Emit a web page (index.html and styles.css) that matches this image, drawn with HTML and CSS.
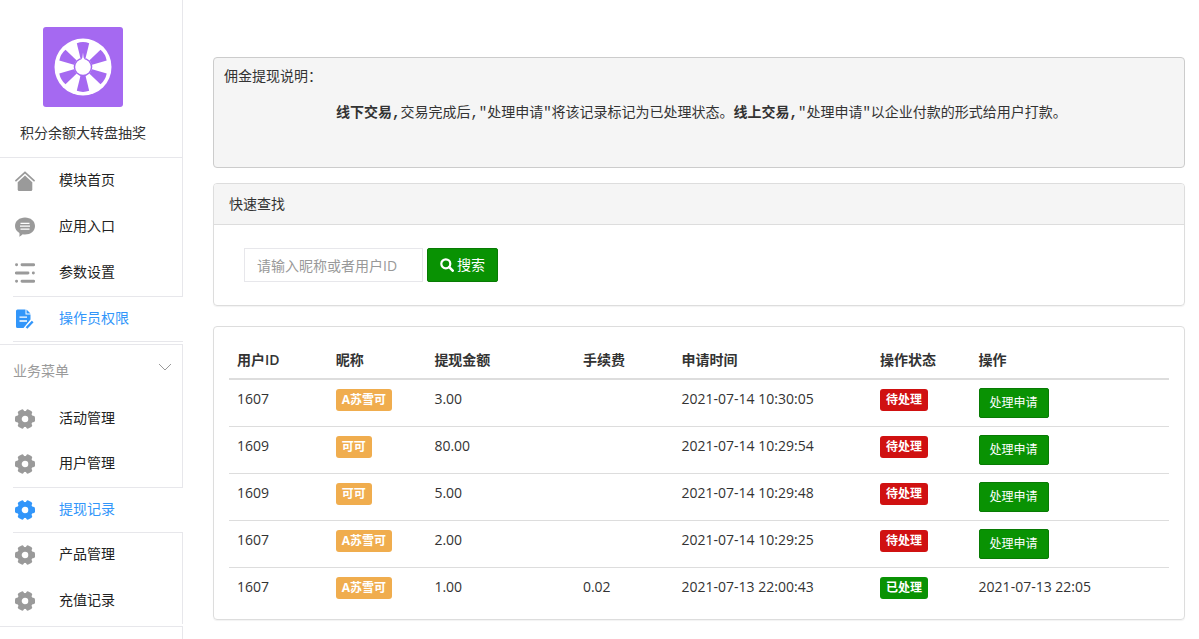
FILE: index.html
```html
<!DOCTYPE html>
<html lang="zh-CN">
<head>
<meta charset="utf-8">
<title>提现记录</title>
<link rel="stylesheet" href="styles.css">
</head>
<body>
<svg class="sprite" aria-hidden="true">
  <symbol id="gear" viewBox="0 0 20 20">
    <circle cx="10" cy="10" r="5.700" fill="none" stroke="currentColor" stroke-width="4.800"/>
    <g fill="currentColor">
      <rect x="0" y="6.800" width="5" height="6.400" rx="1.800"/>
      <rect x="0" y="6.800" width="5" height="6.400" rx="1.800" transform="rotate(60 10 10)"/>
      <rect x="0" y="6.800" width="5" height="6.400" rx="1.800" transform="rotate(120 10 10)"/>
      <rect x="0" y="6.800" width="5" height="6.400" rx="1.800" transform="rotate(180 10 10)"/>
      <rect x="0" y="6.800" width="5" height="6.400" rx="1.800" transform="rotate(240 10 10)"/>
      <rect x="0" y="6.800" width="5" height="6.400" rx="1.800" transform="rotate(300 10 10)"/>
    </g>
  </symbol>
</svg>
<div class="layout">
  <aside class="sidebar">
    <header class="brand">
      <svg class="brand-logo" viewBox="0 0 80 80" aria-hidden="true">
        <rect width="80" height="80" rx="3" fill="#a569f1"/>
        <circle cx="40" cy="40" r="28.500" fill="#fff"/>
        <g fill="#a569f1">
          <path id="slot" d="M37.400 31L33.800 16.200Q40 14 46.200 16.200L42.600 31Z"/>
          <use href="#slot" transform="rotate(60 40 40)"/>
          <use href="#slot" transform="rotate(120 40 40)"/>
          <use href="#slot" transform="rotate(180 40 40)"/>
          <use href="#slot" transform="rotate(240 40 40)"/>
          <use href="#slot" transform="rotate(300 40 40)"/>
          <circle cx="40" cy="40" r="9.300"/>
        </g>
        <circle cx="40" cy="40" r="7.800" fill="#fff"/>
        <path d="M37.800 33.500L39.400 30.500L40 25.500L40.600 30.500L42.200 33.500Z" fill="#fff"/>
      </svg>
      <div class="brand-name">积分余额大转盘抽奖</div>
    </header>
    <nav class="menu">
      <a class="menu-item" href="#">
        <svg class="icon" viewBox="0 0 20 20" aria-hidden="true"><path d="M1 9.600L10 1.400L19 9.600" fill="none" stroke="currentColor" stroke-width="1.800" stroke-linecap="round"/><path fill="currentColor" d="M10 4.600L17.300 11.200V18.500Q17.300 20 15.800 20H4.200Q2.700 20 2.700 18.500V11.200Z"/></svg>
        <span>模块首页</span></a>
      <a class="menu-item" href="#">
        <svg class="icon" viewBox="0 0 20 20" aria-hidden="true"><path fill="currentColor" d="M10 .5C15.600.5 20 4 20 9S15.600 17.500 10 17.500Q8.800 17.500 7.700 17.300Q6 19.200 4.200 19.700Q4.800 18 4.400 15.900Q0 13.500 0 9C0 4 4.400.5 10 .5Z"/><path d="M5.500 6.300H14.500M5 9.200H15M5.500 12.100H14.500" stroke="#fff" stroke-width="1.200"/></svg>
        <span>应用入口</span></a>
      <a class="menu-item" href="#">
        <svg class="icon" viewBox="0 0 20 20" aria-hidden="true"><path d="M1.500 1.800H1.600M7 1.800H18.700M1.300 10H13M18.300 10H18.400M1.500 18.200H1.600M7 18.200H18.700" stroke="currentColor" stroke-width="2.900" stroke-linecap="round"/></svg>
        <span>参数设置</span></a>
      <a class="menu-item active" href="#">
        <svg class="icon" viewBox="0 0 20 20" aria-hidden="true"><path fill="currentColor" d="M2.500.5H10.500V5.500H15.500V10.500L8.500 19H2.500Q1 19 1 17.500V2Q1 .5 2.500.5ZM11.500.5L15.500 4.500H11.500Z"/><path d="M4.500 8.200H12M4.500 12H12" stroke="#fff" stroke-width="1.300"/><path d="M17.700 12.500L11.500 19" stroke="currentColor" stroke-width="2.400"/></svg>
        <span>操作员权限</span></a>
    </nav>
    <nav class="menu menu-business">
      <button class="menu-title" type="button">业务菜单
        <svg class="chevron" viewBox="0 0 14 8" aria-hidden="true"><path d="M1 1L7 7L13 1" fill="none" stroke="currentColor"/></svg>
      </button>
      <a class="menu-item" href="#"><svg class="icon" aria-hidden="true"><use href="#gear"/></svg><span>活动管理</span></a>
      <a class="menu-item" href="#"><svg class="icon" aria-hidden="true"><use href="#gear"/></svg><span>用户管理</span></a>
      <a class="menu-item active" href="#"><svg class="icon" aria-hidden="true"><use href="#gear"/></svg><span>提现记录</span></a>
      <a class="menu-item" href="#"><svg class="icon" aria-hidden="true"><use href="#gear"/></svg><span>产品管理</span></a>
      <a class="menu-item" href="#"><svg class="icon" aria-hidden="true"><use href="#gear"/></svg><span>充值记录</span></a>
    </nav>
    <div class="sidebar-rest"></div>
  </aside>
  <main class="content">
    <section class="notice">
      <p>佣金提现说明：</p>
      <p class="notice-body"><strong>线下交易,</strong>交易完成后,"处理申请"将该记录标记为已处理状态。<strong>线上交易,</strong>"处理申请"以企业付款的形式给用户打款。</p>
    </section>
    <section class="panel search-panel">
      <h1 class="panel-heading">快速查找</h1>
      <form class="search">
        <input class="search-input" type="text" placeholder="请输入昵称或者用户ID" aria-label="请输入昵称或者用户ID">
        <button class="btn" type="button">
          <svg class="search-icon" viewBox="0 0 14 14" aria-hidden="true"><circle cx="5.800" cy="5.800" r="4.500" fill="none" stroke="currentColor" stroke-width="2.200"/><path d="M9.200 9.200L12.700 12.700" stroke="currentColor" stroke-width="2.600" stroke-linecap="round"/></svg>
          搜索
        </button>
      </form>
    </section>
    <section class="panel table-panel">
      <table class="records">
        <colgroup><col class="w2"><col class="w2"><col class="w3"><col class="w2"><col class="w4"><col class="w2"><col class="w4"></colgroup>
        <thead>
          <tr><th>用户ID</th><th>昵称</th><th>提现金额</th><th>手续费</th><th>申请时间</th><th>操作状态</th><th>操作</th></tr>
        </thead>
        <tbody>
          <tr><td>1607</td><td><span class="label name">A苏雪可</span></td><td>3.00</td><td></td><td>2021-07-14 10:30:05</td><td><span class="label pending">待处理</span></td><td><button class="btn btn-small" type="button">处理申请</button></td></tr>
          <tr><td>1609</td><td><span class="label name">可可</span></td><td>80.00</td><td></td><td>2021-07-14 10:29:54</td><td><span class="label pending">待处理</span></td><td><button class="btn btn-small" type="button">处理申请</button></td></tr>
          <tr><td>1609</td><td><span class="label name">可可</span></td><td>5.00</td><td></td><td>2021-07-14 10:29:48</td><td><span class="label pending">待处理</span></td><td><button class="btn btn-small" type="button">处理申请</button></td></tr>
          <tr><td>1607</td><td><span class="label name">A苏雪可</span></td><td>2.00</td><td></td><td>2021-07-14 10:29:25</td><td><span class="label pending">待处理</span></td><td><button class="btn btn-small" type="button">处理申请</button></td></tr>
          <tr><td>1607</td><td><span class="label name">A苏雪可</span></td><td>1.00</td><td>0.02</td><td>2021-07-13 22:00:43</td><td><span class="label done">已处理</span></td><td>2021-07-13 22:05</td></tr>
        </tbody>
      </table>
    </section>
  </main>
</div>
</body>
</html>
```
FILE: styles.css
```css
* {
  box-sizing: border-box;
}

body {
  margin: 0;
  background: #fff;
  color: #333;
  font: 14px/20px "Open Sans", "Noto Sans CJK SC", sans-serif;
}

button,
input {
  font: inherit;
}

.sprite {
  position: absolute;
  width: 0;
  height: 0;
}

.layout {
  display: flex;
  min-height: 100vh;
}

/* Sidebar */
.sidebar {
  display: flex;
  flex: 0 0 183px;
  flex-direction: column;
}

.brand {
  display: flex;
  flex-direction: column;
  align-items: center;
  gap: 16px;
  padding: 27px 16px 14px 0;
  border-right: 1px solid #e7e7eb;
  border-bottom: 1px solid #e7e7eb;
}

.brand-logo {
  width: 80px;
  height: 80px;
}

.menu {
  display: flex;
  flex-direction: column;
}

.menu-item {
  display: flex;
  align-items: center;
  gap: 24px;
  height: 46px;
  margin-left: 13px;
  padding-left: 2px;
  border-right: 1px solid #e7e7eb;
  color: #222;
  text-decoration: none;
}

.menu-item span {
  padding-bottom: 2px;
}

.menu-item.active {
  margin-bottom: -1px;
  border: solid #e7e7eb;
  border-width: 1px 0;
  color: #3296fa;
}

.icon {
  width: 20px;
  height: 20px;
  color: #9a9a9a;
}

.active .icon {
  color: #3296fa;
}

.menu-business {
  margin-top: 3px;
  padding-bottom: 2px;
  border: solid #e7e7eb;
  border-width: 1px 0;
}

.menu-title {
  display: flex;
  align-items: center;
  justify-content: space-between;
  height: 51px;
  padding: 0 10px 0 13px;
  border: 0;
  border-right: 1px solid #e7e7eb;
  background: none;
  color: #9a9a9a;
}

.menu-title + .menu-item {
  height: 45px;
}

.chevron {
  width: 14px;
  height: 8px;
  margin-bottom: 8px;
}

.sidebar-rest {
  flex: 1;
  border-right: 1px solid #e7e7eb;
}

/* Content */
.content {
  flex: 1;
  min-width: 0;
  padding: 57px 14px 19px 30px;
}

.notice {
  margin-bottom: 15px;
  padding: 10px 10px 27px;
  border: 1px solid #ccc;
  border-radius: 4px;
  background: #f5f5f5;
  font: 14px/18px "Liberation Mono", "Noto Sans CJK SC", monospace;
}

.notice p {
  min-height: 18px;
  margin: 0;
}

.notice .notice-body {
  margin: 18px 0;
  padding-left: 112px;
}

.panel {
  border: 1px solid #ddd;
  border-radius: 4px;
  box-shadow: 0 1px 1px rgba(0, 0, 0, 0.05);
}

.search-panel {
  margin-bottom: 20px;
}

.panel-heading {
  margin: 0;
  padding: 10px 15px;
  border-bottom: 1px solid #ddd;
  border-radius: 3px 3px 0 0;
  background: #f5f5f5;
  font-size: 14px;
  font-weight: 400;
}

.search {
  display: flex;
  gap: 4px;
  padding: 23px 30px;
}

.search-input {
  width: 179px;
  height: 34px;
  padding: 0 12px;
  border: 1px solid #e7e7eb;
  background: #fff;
  color: #555;
}

.search-input::placeholder {
  color: #999;
}

.btn {
  display: inline-flex;
  align-items: center;
  gap: 3px;
  height: 34px;
  padding: 0 12px;
  border: 1px solid #087b04;
  border-radius: 2px;
  background: #099203;
  color: #fff;
}

.btn-small {
  height: 30px;
  padding: 0 10px;
  font-size: 12px;
  vertical-align: top;
}

.search-icon {
  width: 14px;
  height: 14px;
}

/* Records table */
.table-panel {
  padding: 15px;
}

.records {
  width: 100%;
  border-collapse: collapse;
  table-layout: fixed;
}

.w2 {
  width: 10.5%;
}

.w3 {
  width: 15.8%;
}

.w4 {
  width: 21.1%;
}

.records th {
  padding: 8px;
  border-bottom: 2px solid #ddd;
  font-weight: 600;
  text-align: left;
}

.records td {
  padding: 8px;
  border-top: 1px solid #ddd;
  line-height: 22px;
  vertical-align: top;
}

.records tbody tr:last-child td {
  padding-bottom: 5px;
}

.label {
  display: inline-block;
  margin-top: 1px;
  padding: 0 6px;
  border-radius: 3px;
  color: #fff;
  font-size: 12px;
  font-weight: 700;
  line-height: 22px;
  vertical-align: top;
}

.name {
  background: #f0ad4e;
}

.pending {
  background: #d01111;
}

.done {
  background: #099203;
}
```
